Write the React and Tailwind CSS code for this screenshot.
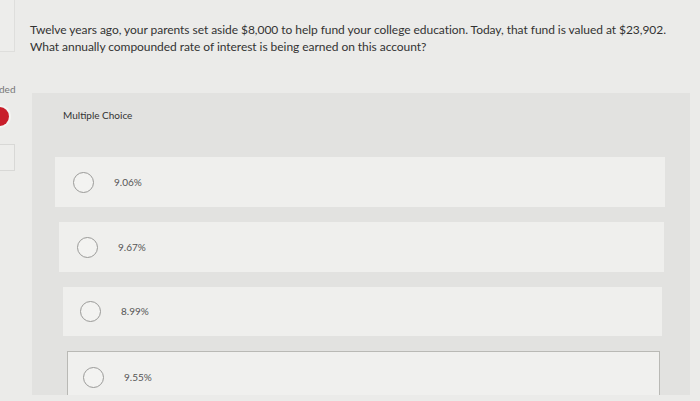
import React from "react";

function Radio() {
  return <div className="w-[21px] h-[21px] rounded-full border-[1.5px] border-[#9a9a98] bg-[#f3f3f1] shrink-0" />;
}

export default function App() {
  const opts = [
    { t: "9.06%", ml: "ml-0", mr: "mr-[25px]", pl: "pl-[18px]", h: "h-[50px]", extra: "bg-[#efefed]" },
    { t: "9.67%", ml: "ml-[4px]", mr: "mr-[26px]", pl: "pl-[18px]", h: "h-[50px]", extra: "bg-[#efefed]" },
    { t: "8.99%", ml: "ml-[8px]", mr: "mr-[28px]", pl: "pl-[17px]", h: "h-[49px]", extra: "bg-[#efefed]" },
    { t: "9.55%", ml: "ml-[12px]", mr: "mr-[30px]", pl: "pl-[15px]", h: "h-[52px]", extra: "bg-[#f0f0ee] border border-[#b9b9b5]" },
  ];
  return (
    <div className="w-[700px] h-[401px] overflow-hidden bg-[#ebebe9] flex" style={{ fontFamily: "Lato, 'Open Sans', sans-serif" }}>
      <div className="w-[16px] shrink-0 flex flex-col">
        <div className="h-[52px] w-[15px] border-r border-b border-[#dededc] bg-[#ededeb]" />
        <div className="mt-[31px] text-[10px] leading-[12px] text-[#777] -ml-[1px]">ded</div>
        <div className="mt-[12px] -ml-[10px] w-[19px] h-[19px] rounded-full bg-[#c81e2a] ring-2 ring-[#f4f4f2]" />
        <div className="mt-[18px] h-[27px] w-[15px] border border-l-0 border-[#d8d8d6] bg-[#ededeb]" />
      </div>
      <div className="flex-1 pl-[14px] pr-[10px] pt-[21px] flex flex-col">
        <div className="text-[12px] leading-[17px] text-[#333] tracking-[-0.05px]">
          <p>Twelve years ago, your parents set aside $8,000 to help fund your college education. Today, that fund is valued at $23,902.</p>
          <p>What annually compounded rate of interest is being earned on this account?</p>
        </div>
        <div className="mt-[38px] ml-[2px] h-[302px] bg-[#e2e2e0] overflow-hidden flex flex-col">
          <div className="pl-[31px] pt-[16px] text-[10px] leading-[12px] text-[#333]">Multiple Choice</div>
          <div className="mt-[36px] pl-[23px] flex flex-col gap-[15px]">
            {opts.map((o, i) => (
              <div key={i} className={`${o.h} ${o.ml} ${o.mr} ${o.pl} ${o.extra} flex items-center`}>
                <Radio />
                <span className="ml-[20px] text-[10px] text-[#555]">{o.t}</span>
              </div>
            ))}
          </div>
        </div>
      </div>
    </div>
  );
}
